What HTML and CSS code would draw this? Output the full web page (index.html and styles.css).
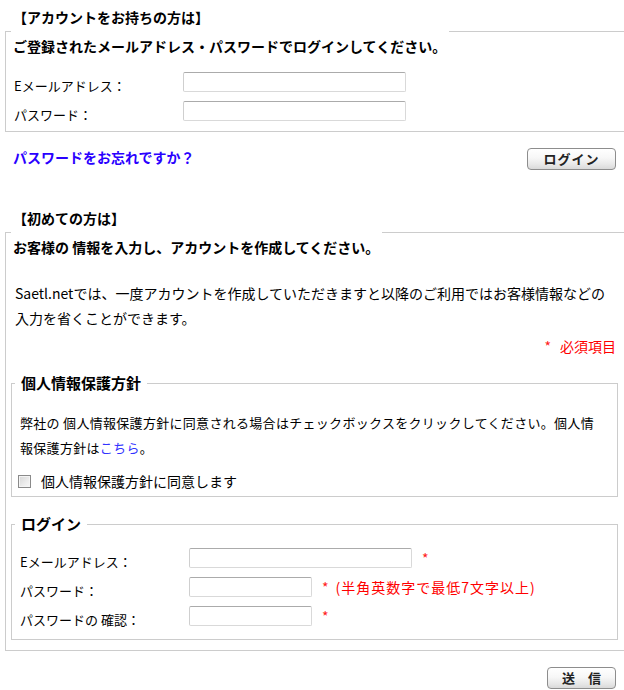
FILE: index.html
```html
<!DOCTYPE html>
<html lang="ja">
<head>
<meta charset="utf-8">
<title>ログイン</title>
<link rel="stylesheet" href="styles.css">
</head>
<body>
<form class="page">
  <fieldset class="group group-member">
    <legend class="group-legend">
      <span class="group-title">【アカウントをお持ちの方は】</span>
      <span class="group-lead">ご登録されたメールアドレス・パスワードでログインしてください。</span>
    </legend>
    <div class="field-grid member-grid">
      <label class="field-label" for="m-email">Eメールアドレス：</label>
      <div class="field-cell"><input id="m-email" class="text-input input-wide" type="text"></div>
      <label class="field-label" for="m-pass">パスワード：</label>
      <div class="field-cell"><input id="m-pass" class="text-input input-wide" type="password"></div>
    </div>
  </fieldset>

  <div class="action-row action-split">
    <a class="forgot-link" href="#">パスワードをお忘れですか？</a>
    <button class="btn btn-login" type="button">ログイン</button>
  </div>

  <fieldset class="group group-new">
    <legend class="group-legend">
      <span class="group-title">【初めての方は】</span>
      <span class="group-lead">お客様の 情報を入力し、アカウントを作成してください。</span>
    </legend>
    <p class="intro">Saetl.netでは、一度アカウントを作成していただきますと以降のご利用ではお客様情報などの<br>入力を省くことができます。</p>
    <p class="required-note"><span class="mark note-mark">*</span>必須項目</p>

    <fieldset class="subgroup subgroup-policy">
      <legend class="sub-legend">個人情報保護方針</legend>
      <p class="policy-text">弊社の 個人情報保護方針に同意される場合はチェックボックスをクリックしてください。個人情<br>報保護方針は<a class="policy-link" href="#">こちら</a>。</p>
      <label class="agree"><input class="agree-box" type="checkbox"><span>個人情報保護方針に同意します</span></label>
    </fieldset>

    <fieldset class="subgroup subgroup-login">
      <legend class="sub-legend">ログイン</legend>
      <div class="field-grid signup-grid">
        <label class="field-label" for="s-email">Eメールアドレス：</label>
        <div class="field-cell"><input id="s-email" class="text-input input-wide" type="text"><span class="mark">*</span></div>
        <label class="field-label" for="s-pass">パスワード：</label>
        <div class="field-cell"><input id="s-pass" class="text-input input-short" type="password"><span class="mark">*</span><span class="hint">(半角英数字で最低7文字以上)</span></div>
        <label class="field-label" for="s-pass2">パスワードの 確認：</label>
        <div class="field-cell"><input id="s-pass2" class="text-input input-short" type="password"><span class="mark">*</span></div>
      </div>
    </fieldset>
  </fieldset>

  <div class="action-row action-end">
    <button class="btn btn-send" type="button">送　信</button>
  </div>
</form>
</body>
</html>
```

FILE: styles.css
```css
html, body {
  margin: 0;
  padding: 0;
  background: #ffffff;
}

body {
  overflow-x: hidden;
  font-family: "Noto Sans CJK JP", "Noto Sans", sans-serif;
  font-size: 14px;
  color: #000000;
}

.page {
  margin: 0;
}

/* outer groups */
.group {
  margin: 0 -4px 0 5px;
  padding: 5px 8px 6px 5px;
  border: 1px solid #cccccc;
  min-width: 0;
}

.group-new {
  margin-top: 31px;
  padding-bottom: 10px;
}

.group-legend {
  padding: 0 3px 4px 2px;
}

.group-title {
  display: block;
  line-height: 34px;
  font-weight: bold;
  font-size: 14px;
}

.group-lead {
  display: block;
  line-height: 24px;
  font-weight: bold;
  font-size: 14px;
}

/* field grids */
.field-grid {
  display: grid;
  grid-template-columns: 169px 1fr;
  grid-auto-rows: 29px;
}

.member-grid {
  margin-left: 3px;
}

.field-label {
  align-self: end;
  line-height: 20px;
  font-size: 13px;
}

.field-cell {
  display: flex;
  align-items: center;
  gap: 10px;
}

.text-input {
  box-sizing: border-box;
  height: 20px;
  margin: 0;
  padding: 1px 3px;
  border: 1px solid #d9d9d9;
  border-top-color: #ababab;
  border-left-color: #cfcfcf;
  border-radius: 2px;
  background: #ffffff;
  font: inherit;
  font-size: 13px;
}

.input-wide {
  width: 223px;
}

.input-short {
  width: 123px;
}

.mark {
  color: #ff2020;
  font-size: 14px;
  line-height: 20px;
}

.note-mark {
  margin-right: 9px;
}

.hint {
  margin-left: -3px;
  color: #ff0000;
  font-size: 14px;
  letter-spacing: 1px;
  line-height: 20px;
}

/* action rows */
.action-row {
  display: flex;
  align-items: center;
  padding: 0 8px 0 13px;
}

.action-split {
  margin-top: 16px;
  justify-content: space-between;
}

.action-end {
  margin-top: 16px;
  justify-content: flex-end;
}

.forgot-link {
  color: #2a00ff;
  font-weight: bold;
  font-size: 14px;
  text-decoration: none;
  line-height: 20px;
  margin-top: -4px;
}

.btn {
  box-sizing: border-box;
  height: 22px;
  margin: 0;
  padding: 0;
  border: 1px solid #8d8d8d;
  border-radius: 4px;
  background: linear-gradient(#ffffff 0%, #f7f7f7 45%, #e6e6e6 80%, #d9d9d9 100%);
  box-shadow: inset 0 1px 0 #ffffff;
  font-family: "Noto Sans CJK JP", sans-serif;
  font-weight: bold;
  font-size: 13px;
  color: #222222;
  line-height: 20px;
}

.btn-login {
  width: 89px;
  letter-spacing: 1px;
}

.btn-send {
  width: 69px;
}

/* new account content */
.intro {
  margin: 13px 0 0;
  padding: 0 6px 0 4px;
  line-height: 25px;
  font-size: 14px;
}

.required-note {
  margin: 3px 0 0;
  padding-right: 3px;
  text-align: right;
  line-height: 25px;
  color: #ff0000;
  font-size: 14px;
}

.subgroup {
  margin: 0 1px 0 0;
  padding: 0 8px 5px 8px;
  border: 1px solid #cccccc;
  min-width: 0;
}

.subgroup-policy {
  margin-top: 14px;
}

.subgroup-login {
  margin-top: 17px;
  padding-bottom: 9px;
}

.sub-legend {
  margin-left: -5px;
  padding: 0 6px;
  line-height: 20px;
  font-weight: bold;
  font-size: 15px;
}

.policy-text {
  margin: 17px 0 0;
  line-height: 25px;
  font-size: 13px;
  letter-spacing: 0.3px;
}

.policy-link {
  color: #3333ff;
  text-decoration: none;
}

.agree {
  display: flex;
  align-items: center;
  gap: 10px;
  margin: 11px 0 0 -2px;
  line-height: 20px;
  font-size: 14px;
}

.agree-box {
  appearance: none;
  -webkit-appearance: none;
  box-sizing: border-box;
  width: 13px;
  height: 13px;
  margin: 0;
  border: 1px solid #8a8a8a;
  background: linear-gradient(135deg, #d6d6d6 0%, #ececec 60%, #f8f8f8 100%);
  box-shadow: inset 0 0 0 1px #f4f4f4;
}

.signup-grid {
  margin-top: 9px;
}
```
